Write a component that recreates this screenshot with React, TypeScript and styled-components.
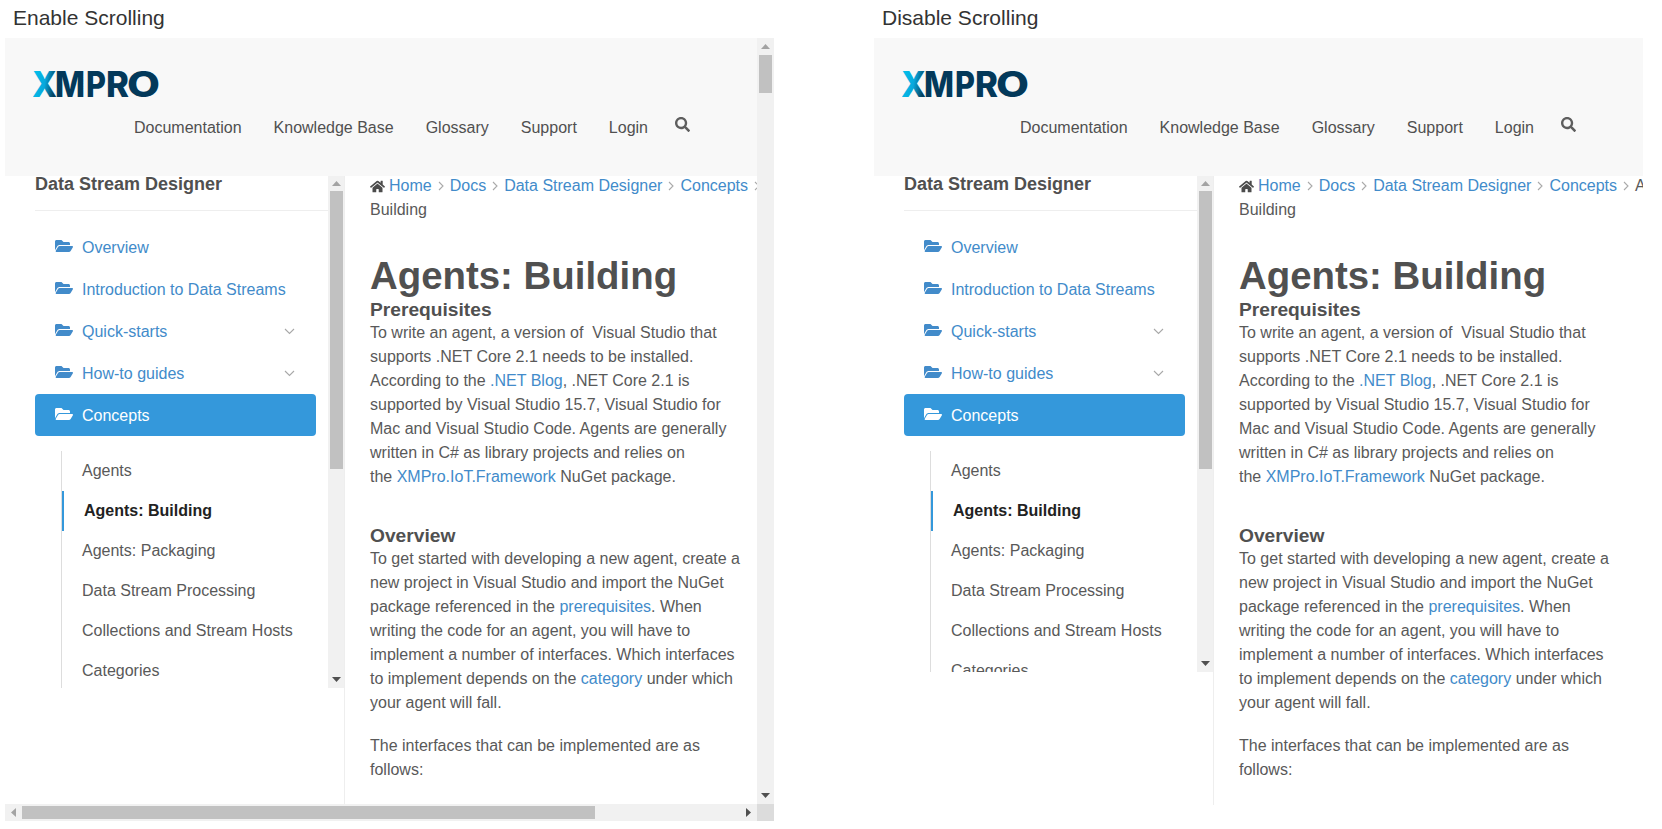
import React from "react";
import styled, { createGlobalStyle } from "styled-components";
import { FaFolderOpen, FaHome, FaSearch } from "react-icons/fa";

const Global = createGlobalStyle`
  html, body { margin: 0; padding: 0; background: #fff; }
  body { font-family: "Liberation Sans", Arial, sans-serif; color: #595959; font-size: 16px; }
  a { color: #428bca; text-decoration: none; }
`;

const Page = styled.div`
  display: flex;
  gap: 100px;
  padding-left: 5px;
  width: 1662px;
  height: 829px;
  overflow: hidden;
  box-sizing: border-box;
`;

const Panel = styled.section`
  width: 769px;
  display: flex;
  flex-direction: column;
`;

const Label = styled.div`
  height: 38px;
  padding-left: 8px;
  font-size: 21px;
  line-height: 36px;
  color: #333;
`;

const Frame = styled.div<{ $scroll: boolean }>`
  display: grid;
  grid-template-columns: ${(p) => (p.$scroll ? "752px 17px" : "769px")};
  grid-template-rows: ${(p) => (p.$scroll ? "766px 17px" : "767px")};
`;

const Viewport = styled.div`
  overflow: hidden;
  display: flex;
  flex-direction: column;
`;

const Header = styled.header`
  flex: none;
  height: 138px;
  background: #f8f8f8;
  display: flex;
  flex-direction: column;
  padding: 31px 0 0 28px;
  box-sizing: border-box;
`;

const LogoSvg = styled.svg`
  display: block;
  flex: none;
`;

const LogoLetter = styled.text`
  font-family: Inter, "Open Sans", sans-serif;
  font-weight: 800;
  font-size: 35px;
`;

const Nav = styled.nav`
  display: flex;
  justify-content: flex-end;
  align-items: flex-start;
  gap: 32px;
  margin-top: 17px;
  padding-right: 67px;
`;

const NavLink = styled.a`
  color: #505050;
  font-size: 16px;
  line-height: 24px;
`;

const SearchButton = styled.span`
  display: flex;
  color: #5e5e5e;
  font-size: 15px;
  margin: 1px 0 0 -5px;
`;

const Body = styled.div`
  flex: 1;
  display: flex;
  min-height: 0;
`;

const Side = styled.aside<{ $height: number }>`
  flex: none;
  width: 339px;
  height: ${(p) => p.$height}px;
  display: flex;
`;

const SideInner = styled.div`
  flex: 1;
  min-width: 0;
  overflow: hidden;
  padding-left: 30px;
`;

const SideTitle = styled.h4`
  margin: 0 0 15px;
  height: 34px;
  border-bottom: 1px solid #eee;
  font-size: 18px;
  line-height: 16px;
  font-weight: 700;
  color: #505050;
`;

const MenuRow = styled.a<{ $active?: boolean }>`
  display: flex;
  align-items: center;
  width: 281px;
  height: 42px;
  padding: 1px 20px 0;
  box-sizing: border-box;
  border-radius: 4px;
  background: ${(p) => (p.$active ? "#3498db" : "transparent")};
  color: ${(p) => (p.$active ? "#fff" : "#428bca")};
  font-size: 16px;
`;

const FolderIcon = styled(FaFolderOpen)`
  flex: none;
  font-size: 18px;
  margin: -4px 9px 0 0;
`;

const RowText = styled.span`
  flex: 1;
`;

const Chevron = styled.svg`
  flex: none;
  color: #a8a8a8;
  margin: 0 1px 0 0;
`;

const SubList = styled.ul`
  list-style: none;
  margin: 15px 0 0 26px;
  padding: 0;
  border-left: 1px solid #ddd;
`;

const SubItem = styled.li<{ $active?: boolean }>`
  height: 40px;
  line-height: 39px;
  box-sizing: border-box;
  padding-left: ${(p) => (p.$active ? "20px" : "18px")};
  color: ${(p) => (p.$active ? "#222" : "#595959")};
  font-weight: ${(p) => (p.$active ? 700 : 400)};
  border-left: ${(p) => (p.$active ? "2px solid #3498db" : "2px solid transparent")};
  font-size: 16px;
`;

const VTrack = styled.div<{ $width?: number }>`
  flex: none;
  width: ${(p) => p.$width ?? 17}px;
  background: #f1f1f1;
  display: flex;
  flex-direction: column;
`;

const HTrack = styled.div`
  height: 17px;
  background: #f1f1f1;
  display: flex;
`;

const ArrowBox = styled.span<{ $auto?: boolean; $size?: number }>`
  flex: none;
  height: ${(p) => p.$size ?? 17}px;
  display: flex;
  align-items: center;
  justify-content: center;
  margin: ${(p) => (p.$auto ? "auto 0 0 0" : "0")};
`;

const HArrowBox = styled.span<{ $auto?: boolean }>`
  flex: none;
  width: 17px;
  height: 17px;
  display: flex;
  align-items: center;
  justify-content: center;
  margin: ${(p) => (p.$auto ? "0 0 0 auto" : "0")};
`;

const VThumb = styled.div<{ $size: number }>`
  flex: none;
  width: 13px;
  margin-left: 2px;
  height: ${(p) => p.$size}px;
  background: #c1c1c1;
`;

const HThumb = styled.div<{ $size: number }>`
  flex: none;
  height: 13px;
  margin-top: 2px;
  width: ${(p) => p.$size}px;
  background: #c1c1c1;
`;

const Corner = styled.div`
  background: #dcdcdc;
`;

const Tri = styled.svg`
  display: block;
`;

const Content = styled.main`
  flex: 1;
  min-width: 0;
  padding-left: 25px;
  border-left: 1px solid #eee;
  overflow: hidden;
`;

const Crumbs = styled.div`
  display: flex;
  align-items: center;
  white-space: nowrap;
  height: 20px;
  font-size: 16px;
  line-height: 20px;
  & > * {
    flex: none;
  }
`;

const CrumbLast = styled.div`
  height: 28px;
  font-size: 16px;
  line-height: 28px;
`;

const HomeIcon = styled(FaHome)`
  font-size: 15px;
  color: #4c4c4c;
  margin-right: 4px;
`;

const CrumbSep = styled.svg`
  margin: 0 6px;
  color: #aaa;
`;

const CrumbTail = styled.span`
  color: #595959;
`;

const Title = styled.h1`
  margin: 30px 0 0;
  font-size: 38.4px;
  line-height: 44px;
  font-weight: 700;
  color: #505050;
`;

const H2 = styled.h2`
  margin: 0;
  font-size: 19.2px;
  line-height: 23px;
  font-weight: 700;
  color: #505050;
`;

const Para = styled.p`
  margin: 0;
  width: 372px;
  font-size: 16px;
  line-height: 24px;
`;

const SpacedH2 = styled(H2)`
  margin-top: 35px;
`;

const SpacedPara = styled(Para)`
  margin-top: 19px;
`;

const Up = () => (
  <Tri width="9" height="5" viewBox="0 0 9 5"><path d="M4.5 0L9 5H0z" fill="#a3a3a3" /></Tri>
);
const Down = () => (
  <Tri width="9" height="5" viewBox="0 0 9 5"><path d="M0 0h9L4.5 5z" fill="#505050" /></Tri>
);
const Left = () => (
  <Tri width="5" height="9" viewBox="0 0 5 9"><path d="M5 0v9L0 4.5z" fill="#a3a3a3" /></Tri>
);
const Right = () => (
  <Tri width="5" height="9" viewBox="0 0 5 9"><path d="M0 0l5 4.5L0 9z" fill="#505050" /></Tri>
);

const letters = [
  { c: "M", x: 22, w: 30 },
  { c: "P", x: 53, w: 20 },
  { c: "R", x: 73, w: 23 },
  { c: "O", x: 94, w: 33 },
];

const Logo = ({ id }: { id: string }) => (
  <LogoSvg width="130" height="30" viewBox="0 0 130 30">
    <defs>
      <linearGradient id={id} x1="0" y1="0" x2="1" y2="0.3">
        <stop offset="0" stopColor="#00c8f0" />
        <stop offset="0.6" stopColor="#08a8dc" />
        <stop offset="1" stopColor="#063f5c" />
      </linearGradient>
    </defs>
    <LogoLetter x="-1" y="28" textLength="25" lengthAdjust="spacingAndGlyphs" fill={`url(#${id})`}>X</LogoLetter>
    {letters.map((l) => (
      <LogoLetter key={l.c} x={l.x} y="28" textLength={l.w} lengthAdjust="spacingAndGlyphs" fill="#03395a">
        {l.c}
      </LogoLetter>
    ))}
  </LogoSvg>
);

const Sep = () => (
  <CrumbSep width="6" height="10" viewBox="0 0 6 10">
    <path d="M1 1l4 4-4 4" fill="none" stroke="currentColor" strokeWidth="1.1" />
  </CrumbSep>
);

const Down2 = () => (
  <Chevron width="11" height="7" viewBox="0 0 11 7">
    <path d="M1 1l4.5 4.5L10 1" fill="none" stroke="currentColor" strokeWidth="1.1" />
  </Chevron>
);

const Row = ({ label, chevron, active }: { label: string; chevron?: boolean; active?: boolean }) => (
  <MenuRow $active={active}>
    <FolderIcon />
    <RowText>{label}</RowText>
    {chevron && <Down2 />}
  </MenuRow>
);

const DocFrame = ({ scroll, id }: { scroll: boolean; id: string }) => (
  <Frame $scroll={scroll}>
    <Viewport>
      <Header>
        <Logo id={id} />
        <Nav>
          <NavLink>Documentation</NavLink>
          <NavLink>Knowledge Base</NavLink>
          <NavLink>Glossary</NavLink>
          <NavLink>Support</NavLink>
          <NavLink>Login</NavLink>
          <SearchButton><FaSearch /></SearchButton>
        </Nav>
      </Header>
      <Body>
        <Side $height={scroll ? 512 : 496}>
          <SideInner>
            <SideTitle>Data Stream Designer</SideTitle>
            <Row label="Overview" />
            <Row label="Introduction to Data Streams" />
            <Row label="Quick-starts" chevron />
            <Row label="How-to guides" chevron />
            <Row label="Concepts" active />
            <SubList>
              <SubItem>Agents</SubItem>
              <SubItem $active>Agents: Building</SubItem>
              <SubItem>Agents: Packaging</SubItem>
              <SubItem>Data Stream Processing</SubItem>
              <SubItem>Collections and Stream Hosts</SubItem>
              <SubItem>Categories</SubItem>
            </SubList>
          </SideInner>
          <VTrack $width={16}>
            <ArrowBox $size={15}><Up /></ArrowBox>
            <VThumb $size={278} />
            <ArrowBox $auto><Down /></ArrowBox>
          </VTrack>
        </Side>
        <Content>
          <Crumbs>
            <HomeIcon /><a>Home</a><Sep /><a>Docs</a><Sep /><a>Data Stream Designer</a><Sep /><a>Concepts</a><Sep /><CrumbTail>Agents:</CrumbTail>
          </Crumbs>
          <CrumbLast>Building</CrumbLast>
          <Title>Agents: Building</Title>
          <H2>Prerequisites</H2>
          <Para>
            To write an agent, a version of&nbsp; Visual Studio that supports .NET Core 2.1 needs to be installed.
            According to the <a>.NET Blog</a>, .NET Core 2.1 is supported by Visual Studio 15.7, Visual Studio for
            Mac and Visual Studio Code. Agents are generally written in C# as library projects and relies on
            the&nbsp;<a>XMPro.IoT.Framework</a> NuGet package.
          </Para>
          <SpacedH2>Overview</SpacedH2>
          <Para>
            To get started with developing a new agent, create a new project in Visual Studio and import the NuGet
            package referenced in the <a>prerequisites</a>. When writing the code for an agent, you will have to
            implement a number of interfaces. Which interfaces to implement depends on the <a>category</a> under
            which your agent will fall.
          </Para>
          <SpacedPara>The interfaces that can be implemented are as follows:</SpacedPara>
        </Content>
      </Body>
    </Viewport>
    {scroll && (
      <>
        <VTrack>
          <ArrowBox><Up /></ArrowBox>
          <VThumb $size={38} />
          <ArrowBox $auto><Down /></ArrowBox>
        </VTrack>
        <HTrack>
          <HArrowBox><Left /></HArrowBox>
          <HThumb $size={573} />
          <HArrowBox $auto><Right /></HArrowBox>
        </HTrack>
        <Corner />
      </>
    )}
  </Frame>
);

export default function App() {
  return (
    <Page>
      <Global />
      <Panel>
        <Label>Enable Scrolling</Label>
        <DocFrame scroll id="logo-a" />
      </Panel>
      <Panel>
        <Label>Disable Scrolling</Label>
        <DocFrame scroll={false} id="logo-b" />
      </Panel>
    </Page>
  );
}
